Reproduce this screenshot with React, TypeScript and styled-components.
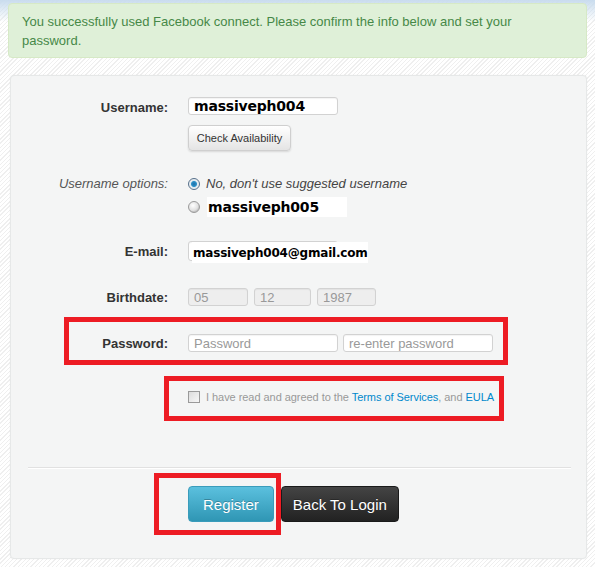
import React from 'react';
import styled, { createGlobalStyle } from 'styled-components';

const GlobalStyle = createGlobalStyle`
  html, body {
    margin: 0;
    padding: 0;
  }
  body {
    font-family: "Liberation Sans", Arial, sans-serif;
    background-color: #ffffff;
    background-image:
      linear-gradient(to bottom, #c9dcee 0px, rgba(255, 255, 255, 0) 22px),
      repeating-linear-gradient(135deg, #ffffff 0px, #ffffff 2px, #efefef 2px, #efefef 3px);
    background-repeat: no-repeat, repeat;
    min-height: 567px;
  }
`;

const Page = styled.div`
  position: relative;
  width: 595px;
  height: 567px;
  padding-top: 3px;
  box-sizing: border-box;
`;

const Alert = styled.div`
  margin: 0 8px 0 8px;
  width: 579px;
  box-sizing: border-box;
  padding: 8px 40px 7px 13px;
  background: #dff0d8;
  border: 1px solid #d6e9c6;
  border-radius: 4px;
  color: #468847;
  font-size: 13px;
  line-height: 19px;
`;

const Panel = styled.div`
  margin: 17px 8px 0 10px;
  width: 577px;
  height: 484px;
  box-sizing: border-box;
  background: #f4f5f5;
  border: 1px solid #e6e8e8;
  border-radius: 4px;
  box-shadow: 0 0 2px rgba(0, 0, 0, 0.06);
  padding-top: 20px;
`;

const Row = styled.div<{ $top?: number }>`
  display: grid;
  grid-template-columns: 157px 1fr;
  column-gap: 20px;
  align-items: center;
  margin-top: ${p => p.$top ?? 0}px;
`;

const Label = styled.div<{ $italic?: boolean; $drop?: number }>`
  text-align: right;
  font-size: 13px;
  padding-top: ${p => p.$drop ?? 0}px;
  color: ${p => (p.$italic ? '#555' : '#333')};
  font-weight: ${p => (p.$italic ? 'normal' : 'bold')};
  font-style: ${p => (p.$italic ? 'italic' : 'normal')};
`;

const Controls = styled.div<{ $gap?: number }>`
  display: flex;
  align-items: center;
  gap: ${p => p.$gap ?? 0}px;
`;

const Input = styled.div<{ $w: number; $h?: number; $disabled?: boolean }>`
  width: ${p => p.$w}px;
  height: ${p => p.$h ?? 18}px;
  box-sizing: border-box;
  border: 1px solid #d2d2d2;
  border-radius: 3px;
  background: ${p => (p.$disabled ? '#eeeeee' : '#ffffff')};
  box-shadow: inset 0 1px 1px rgba(0, 0, 0, 0.05);
  display: flex;
  align-items: center;
  padding-left: 5px;
  font-size: 13px;
  color: #999;
`;

const Filled = styled.span<{ $size: number }>`
  font-family: "DejaVu Sans", Verdana, sans-serif;
  font-weight: bold;
  font-size: ${p => p.$size}px;
  color: #000;
  letter-spacing: -0.2px;
`;

const PasteBox = styled.div<{ $w: number; $h: number }>`
  width: ${p => p.$w}px;
  height: ${p => p.$h}px;
  background: #ffffff;
  display: flex;
  align-items: center;
  padding-left: 1px;
  box-sizing: border-box;
`;

const EmailWrap = styled.div`
  position: relative;
  height: 20px;
`;

const EmailPaste = styled(PasteBox)`
  position: absolute;
  left: 4px;
  top: 1px;
`;

const GrayButton = styled.div`
  width: 103px;
  height: 26px;
  box-sizing: border-box;
  border: 1px solid #cfcfcf;
  border-radius: 4px;
  background: linear-gradient(to bottom, #ffffff, #e4e4e4);
  box-shadow: 0 1px 2px rgba(0, 0, 0, 0.12);
  font-size: 11px;
  color: #333;
  display: flex;
  align-items: center;
  justify-content: center;
`;

const Radio = styled.span<{ $checked?: boolean }>`
  width: 12px;
  height: 12px;
  border-radius: 50%;
  box-sizing: border-box;
  border: 1px solid ${p => (p.$checked ? '#56708a' : '#9a9a9a')};
  background: ${p =>
    p.$checked
      ? 'radial-gradient(circle, #1f6fa8 0, #2a90c8 2.5px, #dfe9f0 3.5px, #f4f4f4 6px)'
      : 'radial-gradient(circle at 40% 35%, #ffffff 0, #e0e0e0 5px, #c8c8c8 6px)'};
  flex: none;
`;

const OptionText = styled.span`
  font-size: 13px;
  font-style: italic;
  color: #444;
`;

const CheckBox = styled.span`
  width: 12px;
  height: 12px;
  box-sizing: border-box;
  border: 1px solid #9a9a9a;
  background: linear-gradient(135deg, #dcdcdc, #f7f7f7);
  flex: none;
`;

const Terms = styled.span`
  font-size: 11px;
  color: #999;
  letter-spacing: -0.05px;
`;

const Link = styled.span`
  color: #0088cc;
`;

const Divider = styled.div`
  margin: 64px 15px 0 17px;
  height: 1px;
  background: #e1e1e1;
  border-bottom: 1px solid #ffffff;
`;

const Actions = styled.div`
  display: flex;
  gap: 7px;
  margin-top: 17px;
  padding-left: 177px;
`;

const ActionButton = styled.div<{ $variant: 'info' | 'dark' }>`
  height: 36px;
  box-sizing: border-box;
  padding: 0 ${p => (p.$variant === 'info' ? 14 : 11)}px;
  border-radius: 4px;
  font-size: 15px;
  color: #ffffff;
  display: flex;
  align-items: center;
  border: 1px solid ${p => (p.$variant === 'info' ? '#3a9cbb' : '#1a1a1a')};
  background: ${p =>
    p.$variant === 'info'
      ? 'linear-gradient(to bottom, #5bc0de, #2f96b4)'
      : 'linear-gradient(to bottom, #444444, #222222)'};
  text-shadow: 0 -1px 0 rgba(0, 0, 0, 0.25);
`;

const Mark = styled.div<{ $x: number; $y: number; $w: number; $h: number }>`
  position: absolute;
  left: ${p => p.$x}px;
  top: ${p => p.$y}px;
  width: ${p => p.$w}px;
  height: ${p => p.$h}px;
  box-sizing: border-box;
  border: 5px solid #ed1c24;
  pointer-events: none;
`;

export default function App() {
  return (
    <>
      <GlobalStyle />
      <Page>
        <Alert>
          You successfully used Facebook connect. Please confirm the info below and set your password.
        </Alert>
        <Panel>
          <Row>
            <Label $drop={4}>Username:</Label>
            <Input $w={150}>
              <Filled $size={14}>massiveph004</Filled>
            </Input>
          </Row>
          <Row $top={10}>
            <span />
            <GrayButton>Check Availability</GrayButton>
          </Row>
          <Row $top={25}>
            <Label $italic>Username options:</Label>
            <Controls $gap={6}>
              <Radio $checked />
              <OptionText>No, don't use suggested username</OptionText>
            </Controls>
          </Row>
          <Row $top={6}>
            <span />
            <Controls $gap={7}>
              <Radio />
              <PasteBox $w={140} $h={20}>
                <Filled $size={14}>massiveph005</Filled>
              </PasteBox>
            </Controls>
          </Row>
          <Row $top={24}>
            <Label>E-mail:</Label>
            <EmailWrap>
              <Input $w={150} $h={20} />
              <EmailPaste $w={176} $h={21}>
                <Filled $size={12}>massiveph004@gmail.com</Filled>
              </EmailPaste>
            </EmailWrap>
          </Row>
          <Row $top={27}>
            <Label>Birthdate:</Label>
            <Controls $gap={6}>
              <Input $w={60} $disabled>05</Input>
              <Input $w={57} $disabled>12</Input>
              <Input $w={59} $disabled>1987</Input>
            </Controls>
          </Row>
          <Row $top={28}>
            <Label>Password:</Label>
            <Controls $gap={5}>
              <Input $w={150}>Password</Input>
              <Input $w={150}>re-enter password</Input>
            </Controls>
          </Row>
          <Row $top={39}>
            <span />
            <Controls $gap={6}>
              <CheckBox />
              <Terms>
                I have read and agreed to the <Link>Terms of Services</Link>, and <Link>EULA</Link>
              </Terms>
            </Controls>
          </Row>
          <Divider />
          <Actions>
            <ActionButton $variant="info">Register</ActionButton>
            <ActionButton $variant="dark">Back To Login</ActionButton>
          </Actions>
        </Panel>
        <Mark $x={64} $y={317} $w={444} $h={48} />
        <Mark $x={164} $y={376} $w={340} $h={45} />
        <Mark $x={154} $y={473} $w={127} $h={62} />
      </Page>
    </>
  );
}
